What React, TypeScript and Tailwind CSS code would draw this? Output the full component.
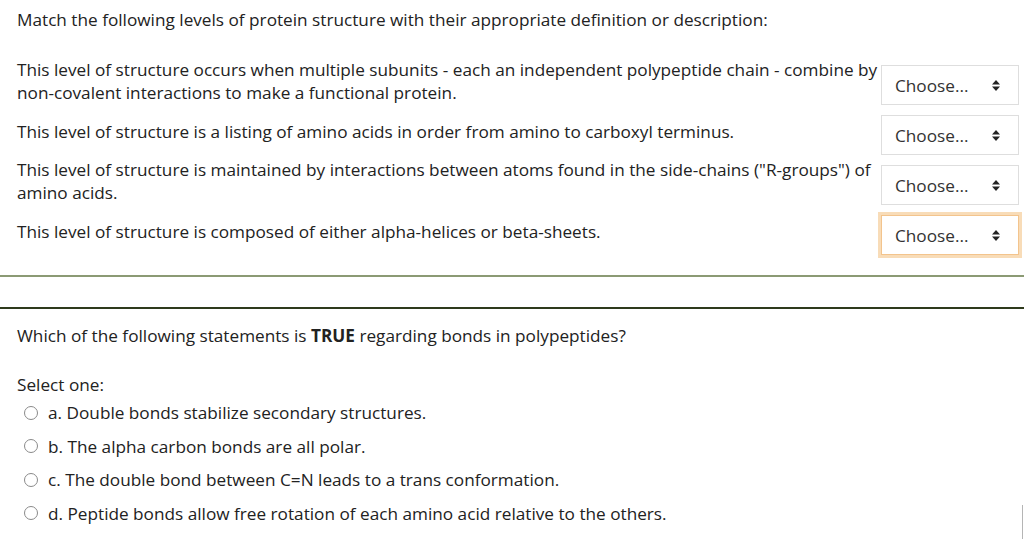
import { useState } from 'react'

const rows = [
  'This level of structure occurs when multiple subunits - each an independent polypeptide chain - combine by non-covalent interactions to make a functional protein.',
  'This level of structure is a listing of amino acids in order from amino to carboxyl terminus.',
  'This level of structure is maintained by interactions between atoms found in the side-chains ("R-groups") of amino acids.',
  'This level of structure is composed of either alpha-helices or beta-sheets.',
]

const options = [
  'a. Double bonds stabilize secondary structures.',
  'b. The alpha carbon bonds are all polar.',
  'c. The double bond between C=N leads to a trans conformation.',
  'd. Peptide bonds allow free rotation of each amino acid relative to the others.',
]

function UpDown() {
  return (
    <svg width="8" height="11" viewBox="0 0 8 11" className="shrink-0">
      <path d="M4 0 L8 4.5 H0 Z" fill="#222" />
      <path d="M0 6.5 H8 L4 11 Z" fill="#222" />
    </svg>
  )
}

function Choose({ focused }: { focused?: boolean }) {
  return (
    <div
      className={`w-[138px] h-10 shrink-0 flex items-center justify-between pl-[13px] pr-[18px] bg-white border ${
        focused ? 'border-[#f3c48d] ring-[3px] ring-[#f8dcb8]' : 'border-[#dedede]'
      }`}
    >
      <span className="text-[#333]">Choose...</span>
      <UpDown />
    </div>
  )
}

export default function App() {
  const [picked, setPicked] = useState<number | null>(null)

  return (
    <div
      className="relative w-[1024px] h-[539px] overflow-hidden bg-white text-[#222] text-[17.2px] leading-[23px]"
      style={{ fontFamily: '"Open Sans", "Noto Sans", sans-serif' }}
    >
      {/* matching question */}
      <div className="pl-[17px] pr-[5px] pt-[8px]">
        <p>Match the following levels of protein structure with their appropriate definition or description:</p>

        <div className="mt-[27px] flex flex-col gap-[3px]">
          {rows.map((text, i) => (
            <div key={i} className="flex items-center">
              <p className="flex-1 pb-2">{text}</p>
              <Choose focused={i === 3} />
            </div>
          ))}
        </div>
      </div>

      <div className="mt-[20px] h-[2px] bg-[#8b9a74]" />
      <div className="mt-[30px] h-[2px] bg-[#2e3a1c]" />

      {/* multiple choice */}
      <div className="pl-[17px] pt-[15px]">
        <p>
          Which of the following statements is <b className="font-bold">TRUE</b> regarding bonds in polypeptides?
        </p>
        <p className="mt-[26px]">Select one:</p>
        <div className="mt-[5px] flex flex-col gap-[10.5px]">
          {options.map((o, i) => (
            <label key={i} className="flex items-center gap-[10px] pl-[7px] cursor-pointer">
              <span
                onClick={() => setPicked(i)}
                className="w-[14px] h-[14px] rounded-full border border-[#8a8a8a] bg-white flex items-center justify-center"
              >
                {picked === i && <span className="w-[6px] h-[6px] rounded-full bg-[#333]" />}
              </span>
              <span>{o}</span>
            </label>
          ))}
        </div>
      </div>

      <div className="absolute right-[1px] bottom-0 w-px h-[34px] bg-[#b5b5b5]" />
    </div>
  )
}
